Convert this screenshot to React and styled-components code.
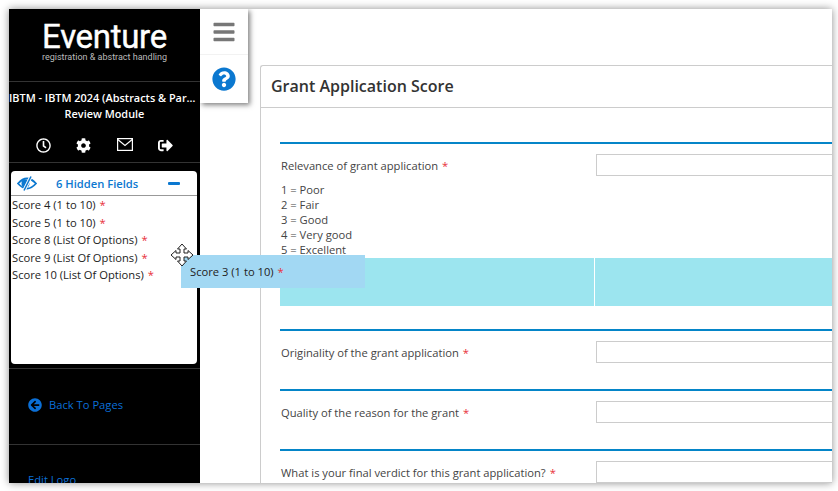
import React from 'react';
import styled, { createGlobalStyle } from 'styled-components';
import {
  FaArrowCircleLeft,
  FaBars,
  FaCog,
  FaQuestionCircle,
  FaRegClock,
  FaSignOutAlt,
} from 'react-icons/fa';

const GlobalStyle = createGlobalStyle`
  html, body {
    margin: 0;
    height: 100%;
    background: #fff;
    overflow: hidden;
  }
  body {
    font-family: "Open Sans", "Liberation Sans", sans-serif;
    font-size: 11.2px;
    color: #333;
  }
`;

const Frame = styled.div`
  position: relative;
  display: flex;
  width: 823px;
  height: 474px;
  margin: 9px 0 0 9px;
  background: #fff;
  box-shadow: 0 0 8px rgba(0, 0, 0, 0.45);
  overflow: hidden;
`;

const Sidebar = styled.aside`
  flex: 0 0 191px;
  width: 191px;
  min-width: 0;
  display: flex;
  flex-direction: column;
  background: #000;
  color: #fff;
  > * {
    flex-shrink: 0;
  }
`;

const Brand = styled.div`
  height: 73px;
  box-sizing: border-box;
  padding-top: 12px;
  text-align: center;
  border-bottom: 1px solid #333;
`;

const BrandName = styled.div`
  font-family: Roboto, "Open Sans", sans-serif;
  font-size: 33px;
  line-height: 31px;
  letter-spacing: -0.3px;
  -webkit-text-stroke: 0.4px #fff;
`;

const BrandTag = styled.div`
  font-family: Roboto, "Open Sans", sans-serif;
  font-size: 9px;
  line-height: 10px;
  color: #bbb;
`;

const EventInfo = styled.div`
  padding-top: 8px;
  text-align: center;
  font-size: 10.9px;
  font-weight: 600;
  line-height: 16px;
`;

const EventTitle = styled.div`
  white-space: nowrap;
  overflow: hidden;
  text-overflow: ellipsis;
`;

const IconBar = styled.div`
  display: flex;
  justify-content: space-between;
  align-items: flex-start;
  height: 41px;
  box-sizing: border-box;
  padding: 16px 27px 0;
  border-bottom: 1px solid #333;
  font-size: 15px;
  svg {
    display: block;
  }
`;

const FieldsCard = styled.div`
  height: 193px;
  margin: 8px 3px 4px 2px;
  background: #fff;
  border-radius: 4px;
  color: #222;
`;

const FieldsHeader = styled.div`
  display: flex;
  align-items: center;
  height: 25px;
  box-sizing: border-box;
  padding: 1px 17px 0 6px;
  border-bottom: 1px solid #999;
  color: #0b78d0;
  font-weight: 600;
`;

const FieldsCount = styled.span`
  margin-left: 19px;
`;

const Minus = styled.span`
  width: 12px;
  height: 3px;
  margin-left: auto;
  border-radius: 1px;
  background: #0b78d0;
`;

const FieldRow = styled.div`
  height: 17.5px;
  line-height: 17.5px;
  padding-left: 1px;
  white-space: nowrap;
`;

const Star = styled.span`
  color: #e8303a;
  margin-left: 4px;
`;

const SideSection = styled.div`
  height: 76px;
  box-sizing: border-box;
  border-top: 1px solid #333;
  padding: 27px 0 0 19px;
`;

const BackLink = styled.a`
  display: flex;
  align-items: center;
  gap: 7px;
  color: #0b6fd6;
  line-height: 18px;
`;

const EditLogo = styled.a`
  display: block;
  padding: 27px 0 0 19px;
  border-top: 1px solid #333;
  color: #0b6fd6;
`;

const Toolbar = styled.div`
  position: absolute;
  left: 191px;
  top: 0;
  width: 48px;
  height: 94px;
  background: #fff;
  box-shadow: 2px 2px 5px rgba(0, 0, 0, 0.5);
  z-index: 2;
`;

const ToolButton = styled.div`
  display: flex;
  align-items: center;
  justify-content: center;
  height: ${props => props.$height}px;
  color: ${props => props.$color};
  font-size: 24px;
  border-bottom: ${props => (props.$divider ? '1px solid #f2f2f2' : 'none')};
`;

const Main = styled.main`
  flex: 1;
  min-width: 0;
  padding: 56px 0 0 60px;
`;

const Panel = styled.section`
  height: 420px;
  border: 1px solid #ccc;
  border-right: none;
  border-bottom: none;
  border-top-left-radius: 3px;
`;

const PanelTitle = styled.h2`
  margin: 0;
  height: 42px;
  box-sizing: border-box;
  padding-left: 10px;
  border-bottom: 1px solid #ccc;
  font-size: 16px;
  font-weight: 600;
  line-height: 41px;
  color: #333;
`;

const PanelBody = styled.div`
  padding: 34px 0 0 19px;
`;

const Question = styled.div`
  border-top: 2px solid #0585c8;
  height: ${props => props.$height}px;
  box-sizing: border-box;
  padding-top: 10px;
`;

const QuestionRow = styled.div`
  display: grid;
  grid-template-columns: 316px 1fr;
  grid-template-rows: 22px;
`;

const Label = styled.label`
  padding-left: 1px;
  color: #444;
  line-height: 24px;
`;

const Input = styled.div`
  height: 22px;
  box-sizing: border-box;
  border: 1px solid #ccc;
  border-right: none;
`;

const Legend = styled.div`
  margin-top: 6px;
  padding-left: 1px;
  line-height: 15px;
  color: #444;
`;

const DropZone = styled.div`
  display: grid;
  grid-template-columns: 314px 1fr;
  gap: 1px;
  height: 48px;
  margin-top: 1px;
`;

const DropCell = styled.div`
  background: #9ce5ef;
`;

const Ghost = styled.div`
  position: absolute;
  left: 172px;
  top: 246px;
  width: 184px;
  height: 33px;
  box-sizing: border-box;
  padding-left: 9px;
  background: #a2d8f3;
  color: #222;
  line-height: 33px;
  z-index: 3;
`;

const MoveCursor = styled.svg`
  position: absolute;
  left: 161px;
  top: 234px;
  width: 24px;
  height: 24px;
  z-index: 4;
`;

const EyeSlash = () => (
  <svg width="20" height="15" viewBox="0 0 20 15">
    <path d="M1 7.5 Q10 -2.5 19 7.5 Q10 17.5 1 7.5 Z" fill="none" stroke="#0b78d0" strokeWidth="1.8" />
    <circle cx="8.5" cy="7.5" r="4" fill="#0b78d0" />
    <path d="M14 0.5 L7 14.5" stroke="#fff" strokeWidth="3.4" />
    <path d="M14 0.5 L7 14.5" stroke="#0b78d0" strokeWidth="1.6" />
  </svg>
);

const Envelope = () => (
  <svg width="16" height="13" viewBox="0 0 16 13" fill="none" stroke="#fff" strokeWidth="1.2">
    <rect x="0.6" y="0.6" width="14.8" height="11.8" />
    <path d="M0.8 1.5 L8 7.5 L15.2 1.5" />
  </svg>
);

const fields = [
  'Score 4 (1 to 10)',
  'Score 5 (1 to 10)',
  'Score 8 (List Of Options)',
  'Score 9 (List Of Options)',
  'Score 10 (List Of Options)',
];

const App = () => (
  <Frame>
    <GlobalStyle />
    <Sidebar>
      <Brand>
        <BrandName>Eventure</BrandName>
        <BrandTag>registration &amp; abstract handling</BrandTag>
      </Brand>
      <EventInfo>
        <EventTitle>IBTM - IBTM 2024 (Abstracts &amp; Parallel)</EventTitle>
        <div>Review Module</div>
      </EventInfo>
      <IconBar>
        <FaRegClock />
        <FaCog />
        <Envelope />
        <FaSignOutAlt />
      </IconBar>
      <FieldsCard>
        <FieldsHeader>
          <EyeSlash />
          <FieldsCount>6 Hidden Fields</FieldsCount>
          <Minus />
        </FieldsHeader>
        {fields.map(field => (
          <FieldRow key={field}>
            {field}
            <Star>*</Star>
          </FieldRow>
        ))}
      </FieldsCard>
      <SideSection>
        <BackLink>
          <FaArrowCircleLeft size={14} />
          Back To Pages
        </BackLink>
      </SideSection>
      <EditLogo>Edit Logo</EditLogo>
    </Sidebar>

    <Toolbar>
      <ToolButton $height={45} $color="#777" $divider>
        <FaBars />
      </ToolButton>
      <ToolButton $height={48} $color="#0b78d0">
        <FaQuestionCircle />
      </ToolButton>
    </Toolbar>

    <Main>
      <Panel>
        <PanelTitle>Grant Application Score</PanelTitle>
        <PanelBody>
          <Question $height={187}>
            <QuestionRow>
              <Label>
                Relevance of grant application
                <Star>*</Star>
              </Label>
              <Input />
            </QuestionRow>
            <Legend>
              <div>1 = Poor</div>
              <div>2 = Fair</div>
              <div>3 = Good</div>
              <div>4 = Very good</div>
              <div>5 = Excellent</div>
            </Legend>
            <DropZone>
              <DropCell />
              <DropCell />
            </DropZone>
          </Question>
          <Question $height={60}>
            <QuestionRow>
              <Label>
                Originality of the grant application
                <Star>*</Star>
              </Label>
              <Input />
            </QuestionRow>
          </Question>
          <Question $height={60}>
            <QuestionRow>
              <Label>
                Quality of the reason for the grant
                <Star>*</Star>
              </Label>
              <Input />
            </QuestionRow>
          </Question>
          <Question $height={60}>
            <QuestionRow>
              <Label>
                What is your final verdict for this grant application?
                <Star>*</Star>
              </Label>
              <Input />
            </QuestionRow>
          </Question>
        </PanelBody>
      </Panel>
    </Main>

    <Ghost>
      Score 3 (1 to 10)
      <Star>*</Star>
    </Ghost>
    <MoveCursor viewBox="0 0 24 24">
      <path
        d="M12 1 L16.5 6 H14 V10 H18 V7.5 L23 12 L18 16.5 V14 H14 V18 H16.5 L12 23 L7.5 18 H10 V14 H6 V16.5 L1 12 L6 7.5 V10 H10 V6 H7.5 Z"
        fill="#fff"
        stroke="#222"
        strokeWidth="1"
      />
    </MoveCursor>
  </Frame>
);

export default App;
